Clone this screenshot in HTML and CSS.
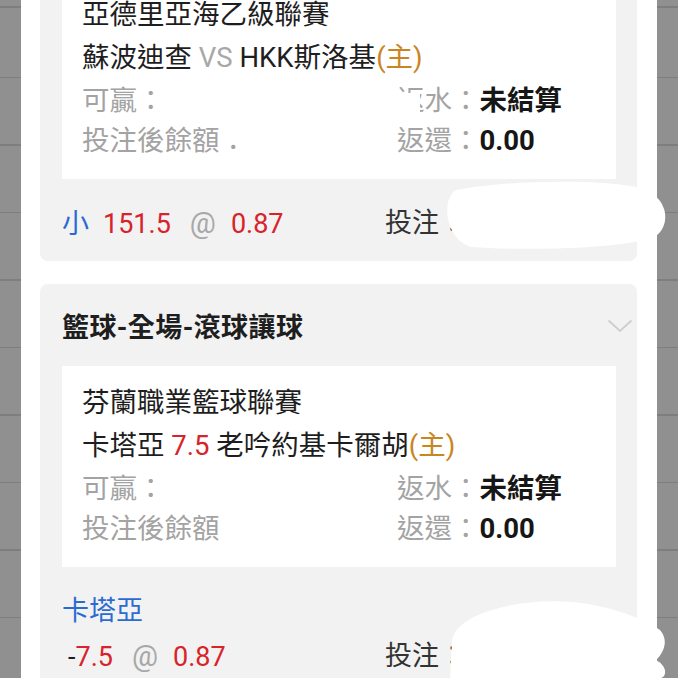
FILE: index.html
```html
<!DOCTYPE html>
<html lang="zh-Hant">
<head>
<meta charset="utf-8">
<title>注單</title>
<link rel="stylesheet" href="styles.css">
</head>
<body>
<div class="screen">
  <div class="strip"></div>
  <main class="sheet">
    <div class="cards">
      <section class="card">
        <header class="card-head">
          <h2 class="title">籃球-全場-滾球大小</h2>
          <svg class="chev" viewBox="0 0 26 14" width="26" height="14"><path d="M1.5 1.5 L13 12 L24.5 1.5" fill="none" stroke="#cfcfcf" stroke-width="2"/></svg>
        </header>
        <div class="detail">
          <div class="line league">亞德里亞海乙級聯賽</div>
          <div class="line match">蘇波迪查 <span class="vs">VS</span> HKK斯洛基<span class="home">(主)</span></div>
          <div class="row r1">
            <div class="cell"><span class="lbl">可贏：</span></div>
            <div class="cell"><span class="lbl">返水：</span><b class="val">未結算</b></div>
          </div>
          <div class="row r2">
            <div class="cell"><span class="lbl">投注後餘額：</span></div>
            <div class="cell"><span class="lbl">返還：</span><b class="val num">0.00</b></div>
          </div>
        </div>
        <div class="foot">
          <div class="foot-row">
            <div class="odds"><span class="pick">小</span><span class="red gap1">151.5</span><span class="at">@</span><span class="red gap3">0.87</span></div>
            <div class="stake">投注：</div>
          </div>
        </div>
      </section>

      <section class="card">
        <header class="card-head">
          <h2 class="title">籃球-全場-滾球讓球</h2>
          <svg class="chev" viewBox="0 0 26 14" width="26" height="14"><path d="M1.5 1.5 L13 12 L24.5 1.5" fill="none" stroke="#cfcfcf" stroke-width="2"/></svg>
        </header>
        <div class="detail">
          <div class="line league">芬蘭職業籃球聯賽</div>
          <div class="line match">卡塔亞 <span class="red">7.5</span> 老吟約基卡爾胡<span class="home">(主)</span></div>
          <div class="row r1">
            <div class="cell"><span class="lbl">可贏：</span></div>
            <div class="cell"><span class="lbl">返水：</span><b class="val">未結算</b></div>
          </div>
          <div class="row r2">
            <div class="cell"><span class="lbl">投注後餘額</span></div>
            <div class="cell"><span class="lbl">返還：</span><b class="val num">0.00</b></div>
          </div>
        </div>
        <div class="foot">
          <div class="pick-line pick">卡塔亞</div>
          <div class="foot-row">
            <div class="odds"><span class="minus">-</span><span class="red">7.5</span><span class="at">@</span><span class="red gap3">0.87</span></div>
            <div class="stake">投注：</div>
          </div>
        </div>
      </section>
    </div>
  </main>
  <div class="strip"></div>

  <svg class="mask" viewBox="0 0 678 678" width="678" height="678" aria-hidden="true">
    <rect x="396" y="93" width="24" height="22" fill="#fff"/>
    <rect x="160" y="86" width="230" height="28" fill="#fff"/>
    <rect x="226" y="126" width="160" height="14" fill="#fff"/>
    <path d="M456 190 C500 181 600 178 640 188 C666 195 673 222 656 236 C632 249 520 251 472 247 C446 241 440 200 456 190 Z" fill="#fff"/>
    <path d="M452 640 C458 612 520 598 572 602 C612 606 642 618 660 630 C669 640 664 653 656 660 C669 667 666 678 660 678 L450 678 Z" fill="#fff"/>
  </svg>
</div>
</body>
</html>
```
FILE: styles.css
```css
* { box-sizing: border-box; }
html, body { margin: 0; padding: 0; }
body {
  font-family: Roboto, "Noto Sans CJK TC", "Noto Sans CJK SC", sans-serif;
  color: #1e1e1e;
  background: #fff;
}
.screen {
  position: relative;
  width: 678px;
  height: 678px;
  overflow: hidden;
  display: flex;
}
.strip {
  width: 21px;
  flex: none;
  background-color: #909090;
  background-image: repeating-linear-gradient(to bottom, transparent 0, transparent 65.5px, #7e7e7e 65.5px, #7e7e7e 67.5px);
  background-position: 0 11px;
}
.sheet {
  flex: 1;
  background: #fff;
}
.cards {
  margin-top: -104px;
  display: flex;
  flex-direction: column;
  gap: 23px;
  padding: 0 20px 0 19px;
}
.card {
  background: #f2f2f2;
  border-radius: 8px;
}
.card-head {
  height: 82px;
  display: flex;
  align-items: center;
  justify-content: space-between;
  padding: 0 4px 0 22px;
}
.title {
  margin: 0;
  font-size: 27px;
  font-weight: 700;
  letter-spacing: 0.4px;
  color: #1e1e1e;
}
.chev { display: block; margin-top: 2px; }
.detail {
  margin: 0 21px 0 22px;
  background: #fff;
  padding: 16px 20px 19px;
  font-size: 27.5px;
}
.line { white-space: nowrap; }
.league { line-height: 42px; }
.match { line-height: 44px; }
.vs { color: #a8a8a8; }
.home { color: #c98522; }
.red { color: #d8232a; }
.row {
  display: grid;
  grid-template-columns: 315px 1fr;
  white-space: nowrap;
}
.r1 { line-height: 41px; }
.r2 { line-height: 39px; }
.lbl { color: #a3a3a3; }
.val { font-weight: 700; color: #161616; }
.foot {
  padding: 22px 0 16px 22px;
  font-size: 27px;
}
.foot-row {
  display: grid;
  grid-template-columns: 323px 1fr;
  line-height: 44px;
  height: 44px;
  white-space: nowrap;
}
.pick { color: #2a6bd2; }
.pick-line { line-height: 45px; }
.gap1 { margin-left: 14px; }
.at { color: #a8a8a8; margin-left: 19px; font-size: 29px; }
.gap3 { margin-left: 15px; }
.minus { margin-left: 6px; color: #1e1e1e; }
.stake { color: #333; }
.mask {
  position: absolute;
  left: 0;
  top: 0;
  pointer-events: none;
}
```
